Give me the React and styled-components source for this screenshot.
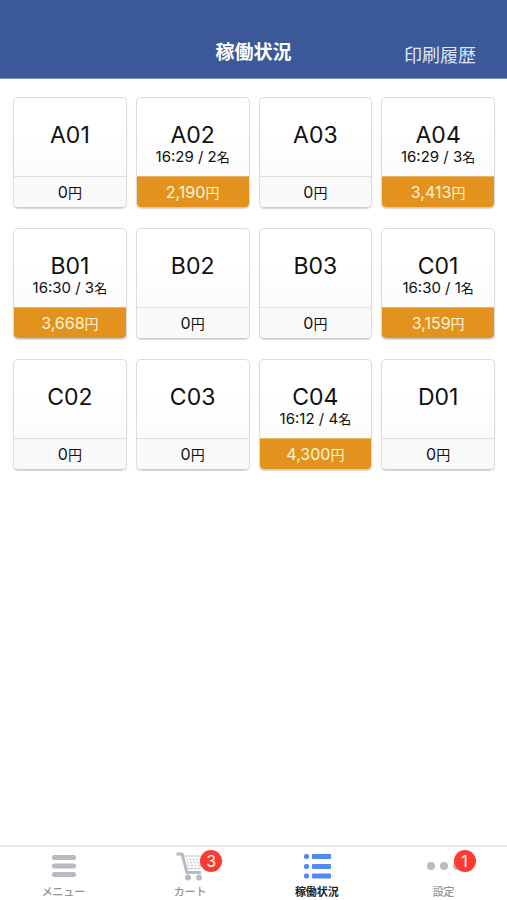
import styled, { createGlobalStyle } from "styled-components";

const GlobalStyle = createGlobalStyle`
  * {
    box-sizing: border-box;
  }
  body {
    margin: 0;
    background-color: #fff;
    font-family: Inter, "Noto Sans CJK JP", sans-serif;
    color: #111;
  }
  button {
    margin: 0;
    font-family: inherit;
    color: inherit;
    cursor: pointer;
  }
`;

const Page = styled.div`
  min-height: 100vh;
  display: flex;
  flex-direction: column;
`;

const Header = styled.header`
  height: 79px;
  padding: 28px 31px 0;
  display: grid;
  grid-template-columns: 1fr auto 1fr;
  align-items: center;
  background-color: #3b5998;
  border-bottom: 1px solid #8296c4;
  color: #fff;
`;

const Title = styled.h1`
  grid-column: 2;
  margin: 0;
  font-size: 19px;
  line-height: 24px;
  font-weight: 700;
`;

const HistoryButton = styled.button`
  justify-self: end;
  margin-top: 6px;
  padding: 0;
  border: none;
  background: none;
  color: #dde4f5;
  font-size: 18px;
  line-height: 24px;
`;

const Tables = styled.main`
  flex: 1;
  padding: 18px 12px 18px 13px;
  display: grid;
  grid-template-columns: repeat(4, 1fr);
  grid-auto-rows: 111px;
  gap: 20px 9px;
  align-content: start;
`;

const Card = styled.button`
  padding: 0;
  display: flex;
  flex-direction: column;
  overflow: hidden;
  border: 1px solid #dcdcdc;
  border-bottom-color: #cbcbcb;
  border-radius: 5px;
  box-shadow: 0 1px 1px rgba(0, 0, 0, 0.16);
  background: linear-gradient(#fff 30%, #f8f8f8);
`;

const CardBody = styled.span`
  flex: 1;
  width: 100%;
  padding-top: 24px;
  display: flex;
  flex-direction: column;
  align-items: center;
`;

const TableName = styled.span`
  font-size: 23px;
  line-height: 26px;
`;

const Seated = styled.span`
  font-size: 15px;
  line-height: 18px;
`;

const Unit = styled.span`
  font-size: ${(props) => (props.$small ? 13 : 14)}px;
`;

const Amount = styled.span`
  width: 100%;
  height: 31px;
  border-top: 1px solid ${(props) => (props.$busy ? "#e8b466" : "#dedede")};
  background-color: ${(props) => (props.$busy ? "#e3931d" : "#f9f9f9")};
  color: ${(props) => (props.$busy ? "#fff3d8" : "#111")};
  font-size: 16px;
  line-height: 30px;
  text-align: center;
`;

const TabBar = styled.nav`
  height: 55px;
  display: grid;
  grid-template-columns: repeat(4, 1fr);
  border-top: 2px solid #ebebeb;
`;

const Tab = styled.button`
  padding: 4px 0 0;
  display: flex;
  flex-direction: column;
  align-items: center;
  border: none;
  background: none;
  color: ${(props) => (props.$active ? "#222" : "#929292")};
`;

const TabIcon = styled.span`
  position: relative;
  width: 32px;
  height: 32px;

  svg {
    display: block;
    overflow: visible;
  }
`;

const TabLabel = styled.span`
  font-size: 11px;
  line-height: 18px;
  font-weight: ${(props) => (props.$active ? 700 : 500)};
`;

const Badge = styled.span`
  position: absolute;
  top: -1px;
  left: 26px;
  width: 22px;
  height: 22px;
  border-radius: 50%;
  background-color: #fc3a30;
  color: #fff;
  font-size: 16px;
  line-height: 22px;
  text-align: center;
`;

function MenuIcon() {
  return (
    <svg width="32" height="32" viewBox="0 0 32 32" fill="#b9bbc4" aria-hidden="true">
      <rect x="5" y="4" width="24" height="5" rx="2" />
      <rect x="5" y="12.500" width="24" height="5" rx="2" />
      <rect x="5" y="21" width="24" height="5" rx="2" />
    </svg>
  );
}

function CartIcon() {
  return (
    <svg width="32" height="32" viewBox="0 0 32 32" fill="none" stroke="#b9bbc4" aria-hidden="true">
      <path d="M2.500 3H8l5 18.500h14" strokeWidth="3" strokeLinejoin="round" />
      <path d="M9 5h19l-2 12.500H12" strokeWidth="0.8" />
      <path d="M12 8.500h15M13 11.500h14M14 14.500h12" strokeWidth="1.4" strokeDasharray="1.4 2" />
      <circle cx="14" cy="26.500" r="3" fill="#b9bbc4" stroke="none" />
      <circle cx="25" cy="26.500" r="3" fill="#b9bbc4" stroke="none" />
    </svg>
  );
}

function ListIcon() {
  return (
    <svg width="32" height="32" viewBox="0 0 32 32" fill="#5088f5" aria-hidden="true">
      <rect x="3" y="3" width="5" height="5" rx="2" />
      <rect x="11" y="3" width="19" height="5" rx="1" />
      <rect x="3" y="13" width="5" height="5" rx="2" />
      <rect x="11" y="13" width="19" height="5" rx="1" />
      <rect x="3" y="22.500" width="5" height="5" rx="2" />
      <rect x="11" y="22.500" width="19" height="5" rx="1" />
    </svg>
  );
}

function MoreIcon() {
  return (
    <svg width="32" height="32" viewBox="0 0 32 32" fill="#bcbcbc" aria-hidden="true">
      <circle cx="3" cy="15" r="4" />
      <circle cx="16" cy="15" r="4" />
      <circle cx="29" cy="15" r="4" />
    </svg>
  );
}

const tables = [
  { name: "A01", amount: 0 },
  { name: "A02", time: "16:29", guests: 2, amount: 2190 },
  { name: "A03", amount: 0 },
  { name: "A04", time: "16:29", guests: 3, amount: 3413 },
  { name: "B01", time: "16:30", guests: 3, amount: 3668 },
  { name: "B02", amount: 0 },
  { name: "B03", amount: 0 },
  { name: "C01", time: "16:30", guests: 1, amount: 3159 },
  { name: "C02", amount: 0 },
  { name: "C03", amount: 0 },
  { name: "C04", time: "16:12", guests: 4, amount: 4300 },
  { name: "D01", amount: 0 },
];

const tabs = [
  { label: "メニュー", Icon: MenuIcon },
  { label: "カート", Icon: CartIcon, badge: 3 },
  { label: "稼働状況", Icon: ListIcon, active: true },
  { label: "設定", Icon: MoreIcon, badge: 1 },
];

function TableCard({ name, time, guests, amount }) {
  return (
    <Card type="button">
      <CardBody>
        <TableName>{name}</TableName>
        {time && (
          <Seated>
            {`${time} / ${guests}`}
            <Unit $small>名</Unit>
          </Seated>
        )}
      </CardBody>
      <Amount $busy={Boolean(time)}>
        {amount.toLocaleString("en-US")}
        <Unit>円</Unit>
      </Amount>
    </Card>
  );
}

export default function App() {
  return (
    <Page lang="ja">
      <GlobalStyle />
      <Header>
        <Title>稼働状況</Title>
        <HistoryButton type="button">印刷履歴</HistoryButton>
      </Header>
      <Tables>
        {tables.map((table) => (
          <TableCard key={table.name} {...table} />
        ))}
      </Tables>
      <TabBar>
        {tabs.map(({ label, Icon, badge, active }) => (
          <Tab
            key={label}
            type="button"
            $active={active}
            aria-current={active ? "page" : undefined}
          >
            <TabIcon>
              <Icon />
              {badge && <Badge>{badge}</Badge>}
            </TabIcon>
            <TabLabel $active={active}>{label}</TabLabel>
          </Tab>
        ))}
      </TabBar>
    </Page>
  );
}
